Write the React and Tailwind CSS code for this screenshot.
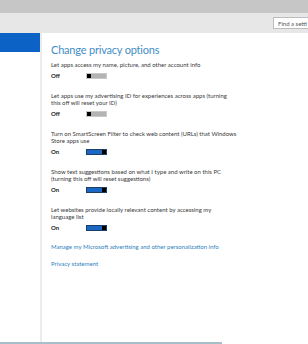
import React from "react";

function Toggle({ on }) {
  if (on) {
    return (
      <div className="flex h-[6px] w-[21px] border border-[#1d3f66]">
        <div className="flex-1 bg-[#1a67c4]" />
        <div className="w-[4px] bg-black" />
      </div>
    );
  }
  return (
    <div className="flex h-[6px] w-[21px] border border-[#c9c9c9]">
      <div className="w-[4px] bg-black" />
      <div className="flex-1 bg-[#b3b3b3]" />
    </div>
  );
}

function Row({ lines, on }) {
  return (
    <div className="flex flex-col">
      {lines.map((l, i) => (
        <div key={i} className="text-[6px] leading-[7px] text-[#3a3a3a] whitespace-nowrap">
          {l}
        </div>
      ))}
      <div className="mt-[4px] flex h-[7px] items-center">
        <div className="w-[35px] text-[6px] font-bold leading-[7px] text-[#222]">
          {on ? "On" : "Off"}
        </div>
        <Toggle on={on} />
      </div>
    </div>
  );
}

export default function App() {
  return (
    <div
      className="flex h-[344px] w-[308px] flex-col overflow-hidden bg-white"
      style={{ fontFamily: "Lato, 'Noto Sans', sans-serif" }}
    >
      <div className="h-[13px] bg-[#c6c6c6]" />
      <div className="flex h-[20px] items-center justify-end bg-[#e7e7e7]">
        <div className="flex h-[12px] w-[35px] items-center border border-r-0 border-[#bdbdbd] bg-white pl-[4px] text-[6px] text-[#555] whitespace-nowrap">
          Find a setti
        </div>
      </div>
      <div className="flex flex-1">
        <div className="w-[40px]">
          <div className="h-[19px] bg-[#0d62c6]" />
        </div>
        <div className="w-[2px] bg-[#ececec]" />
        <div className="flex flex-1 flex-col pl-[9px] pt-[10px]">
          <div className="text-[11px] leading-[14px] tracking-[-0.2px] text-[#3f8dc6] whitespace-nowrap">
            Change privacy options
          </div>
          <div className="mt-[4px] flex flex-col gap-[13px]">
            <Row lines={["Let apps access my name, picture, and other account info"]} on={false} />
            <Row
              lines={[
                "Let apps use my advertising ID for experiences across apps (turning",
                "this off will reset your ID)",
              ]}
              on={false}
            />
            <Row
              lines={[
                "Turn on SmartScreen Filter to check web content (URLs) that Windows",
                "Store apps use",
              ]}
              on
            />
            <Row
              lines={[
                "Show text suggestions based on what I type and write on this PC",
                "(turning this off will reset suggestions)",
              ]}
              on
            />
            <Row
              lines={[
                "Let websites provide locally relevant content by accessing my",
                "language list",
              ]}
              on
            />
          </div>
          <div className="mt-[12px] text-[6px] leading-[7px] text-[#2e7fc2] whitespace-nowrap">
            Manage my Microsoft advertising and other personalization info
          </div>
          <div className="mt-[10px] text-[6px] leading-[7px] text-[#2e7fc2] whitespace-nowrap">
            Privacy statement
          </div>
        </div>
      </div>
      <div className="h-[2px] w-[222px] bg-[#a7bfc9]" />
    </div>
  );
}
